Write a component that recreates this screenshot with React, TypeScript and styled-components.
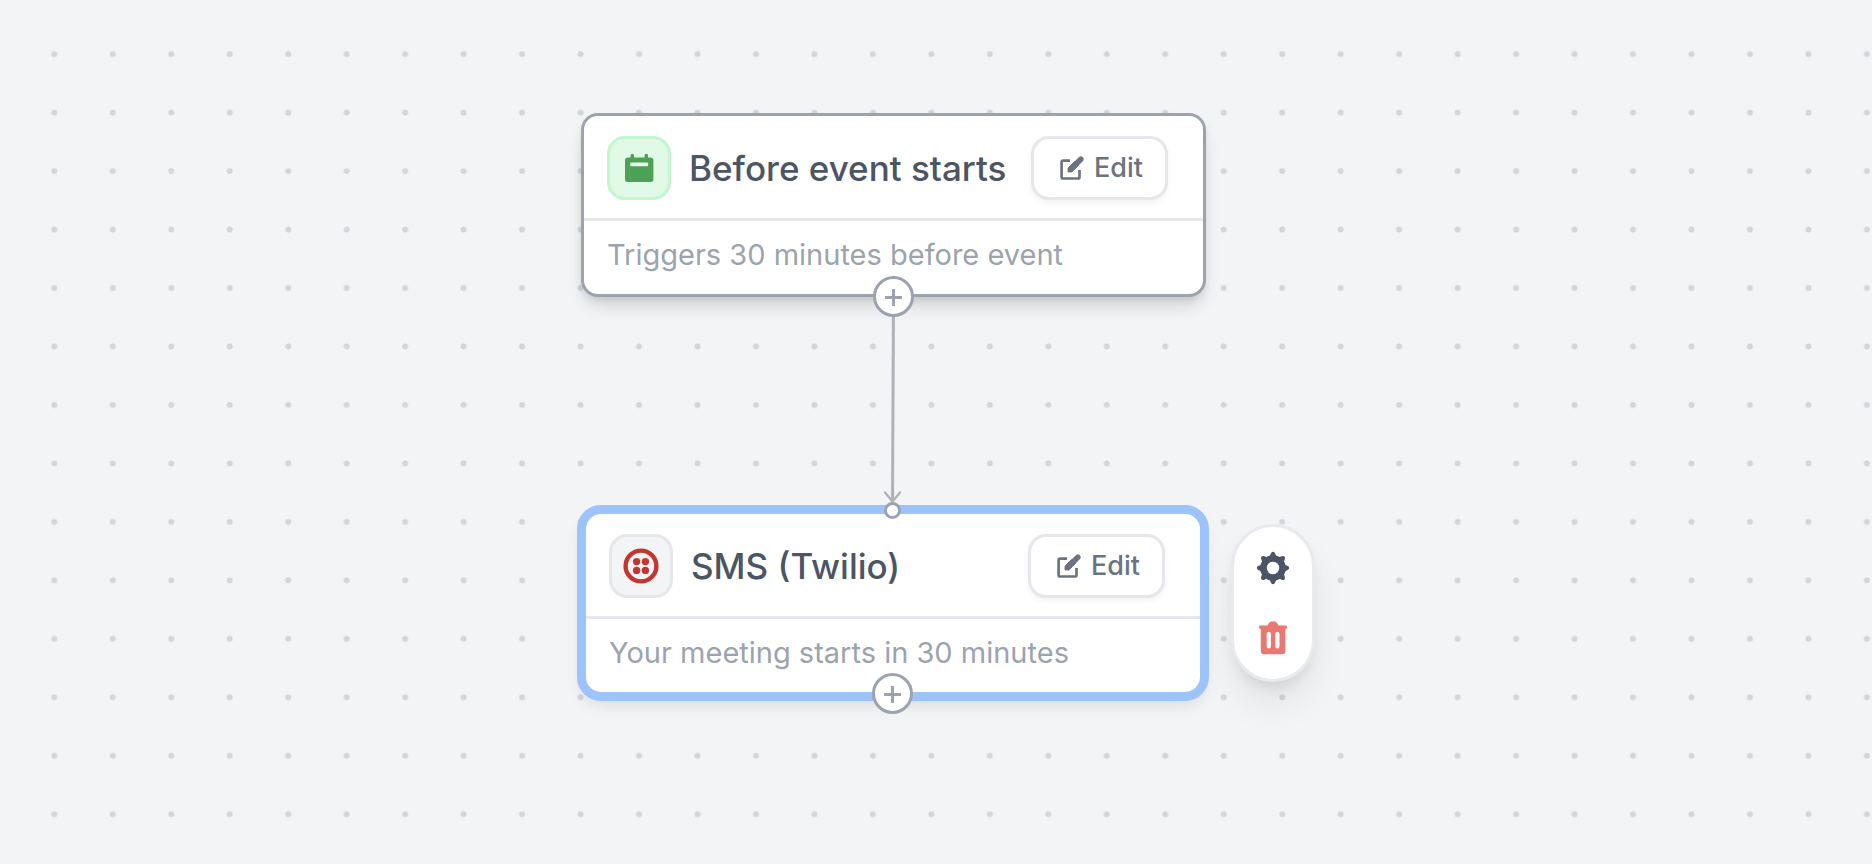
import React from "react";
import styled, { createGlobalStyle } from "styled-components";

const GlobalStyle = createGlobalStyle`
  *, *::before, *::after { box-sizing: border-box; }
  body {
    margin: 0;
    background: #f2f4f6;
    font-family: Inter, "Liberation Sans", sans-serif;
  }
`;

const Canvas = styled.main`
  position: relative;
  width: 100%;
  min-height: 100vh;
  overflow: hidden;
  background: #f2f4f6;
`;

const Backdrop = styled.svg`
  position: absolute;
  inset: 0;
  width: 100%;
  height: 100%;
`;

const NodeShell = styled.article<{ $x: number; $y: number; $width: number; $selected?: boolean }>`
  position: absolute;
  left: ${(p) => p.$x}px;
  top: ${(p) => p.$y}px;
  width: ${(p) => p.$width}px;
  background: #fff;
  border: ${(p) => (p.$selected ? "9px solid #9cc4fa" : "3px solid #9ca3af")};
  border-radius: ${(p) => (p.$selected ? 24 : 17)}px;
  box-shadow: ${(p) =>
    p.$selected
      ? "0 8px 16px -4px rgba(0, 0, 0, 0.1)"
      : "0 12px 18px -4px rgba(0, 0, 0, 0.14), 0 4px 8px -2px rgba(0, 0, 0, 0.1)"};
`;

const NodeHeader = styled.header`
  display: flex;
  align-items: center;
  padding: 20px 35px 18px 23px;
  border-bottom: 3px solid #e5e7eb;
`;

const IconTile = styled.span<{ $tone: "green" | "gray" }>`
  display: flex;
  flex: none;
  width: 64px;
  height: 64px;
  border: 3px solid ${(p) => (p.$tone === "green" ? "#c3f5d1" : "#e5e7eb")};
  border-radius: 18px;
  background: ${(p) => (p.$tone === "green" ? "#e1fae7" : "#f3f4f6")};

  svg { margin: -3px; flex: none; }
`;

const Title = styled.h2`
  flex: 1;
  margin: 0 0 0 18px;
  font-size: 35px;
  line-height: 44px;
  font-weight: 500;
  color: #4b5563;
  white-space: nowrap;
`;

const EditButton = styled.button`
  display: flex;
  flex: none;
  align-items: center;
  gap: 10px;
  height: 64px;
  padding: 0 22px 0 26px;
  border: 3px solid #e5e7eb;
  border-radius: 18px;
  background: #fff;
  box-shadow: 0 3px 6px rgba(0, 0, 0, 0.05);
  font: 500 27px/36px Inter, "Liberation Sans", sans-serif;
  color: #6b7280;
  cursor: pointer;
`;

const Description = styled.p`
  margin: 0;
  padding: 16px 23px 21px;
  font-size: 29px;
  line-height: 36px;
  color: #9ca3af;
  white-space: nowrap;
`;

const AddButton = styled.button<{ $drop: number }>`
  position: absolute;
  left: 50%;
  bottom: -${(p) => p.$drop}px;
  display: flex;
  align-items: center;
  justify-content: center;
  width: 41px;
  height: 41px;
  margin-left: -21px;
  padding: 2px 0 0;
  border: 3px solid #9ca3af;
  border-radius: 50%;
  background: #fff;
  color: #9ca3af;
  cursor: pointer;
`;

const InputHandle = styled.span`
  position: absolute;
  left: 50%;
  top: -12px;
  width: 17px;
  height: 17px;
  margin-left: -9px;
  border: 3px solid #9ca3af;
  border-radius: 50%;
  background: #fff;
`;

const Toolbar = styled.div<{ $x: number; $y: number }>`
  position: absolute;
  left: ${(p) => p.$x}px;
  top: ${(p) => p.$y}px;
  display: flex;
  flex-direction: column;
  align-items: center;
  gap: 34px;
  padding: 23px 21px;
  border: 3px solid #e8eaee;
  border-radius: 42px;
  background: #fff;
  box-shadow: 0 24px 40px -6px rgba(0, 0, 0, 0.09), 0 9px 16px -6px rgba(0, 0, 0, 0.1);
`;

const ToolButton = styled.button<{ $danger?: boolean }>`
  display: flex;
  padding: 0;
  border: 0;
  background: none;
  color: ${(p) => (p.$danger ? "#e87872" : "#4b5563")};
  cursor: pointer;
`;

const CalendarIcon = () => (
  <svg width="64" height="64" viewBox="0 0 64 64" aria-hidden="true">
    <path d="M25.3 19.5v4M39.3 19.5v4" stroke="#4ca154" strokeWidth="3.4" strokeLinecap="round" />
    <rect x="18" y="21.5" width="28.4" height="24.6" rx="3.2" fill="#4ca154" />
    <rect x="23.2" y="26.6" width="18" height="3.6" rx="1.2" fill="#e9fbee" />
  </svg>
);

const TwilioIcon = () => (
  <svg width="64" height="64" viewBox="0 0 64 64" aria-hidden="true" fill="#c23733">
    <circle cx="32" cy="32" r="15.4" fill="none" stroke="#c23733" strokeWidth="4.4" />
    <circle cx="27.6" cy="27.6" r="3.7" />
    <circle cx="36.4" cy="27.6" r="3.7" />
    <circle cx="27.6" cy="36.4" r="3.7" />
    <circle cx="36.4" cy="36.4" r="3.7" />
  </svg>
);

const PencilIcon = () => (
  <svg width="24" height="24" viewBox="0 0 24 24" aria-hidden="true" fill="none" stroke="currentColor">
    <path d="M10 4.6H3.2Q1.6 4.6 1.6 6.2V20.9Q1.6 22.5 3.2 22.5H17.9Q19.5 22.5 19.5 20.9V14" strokeWidth="2.7" />
    <path d="M20.8 3.2 12 12" strokeWidth="5.6" strokeLinecap="round" />
    <path d="M14.5 5.5 8 12V16H12L18.5 9.5Z" fill="currentColor" strokeWidth="0.8" strokeLinejoin="round" />
  </svg>
);

const PlusIcon = () => (
  <svg width="19" height="19" viewBox="0 0 19 19" aria-hidden="true">
    <path d="M9.5 1v17M1 9.5h17" stroke="currentColor" strokeWidth="3" />
  </svg>
);

const GEAR_TEETH = [0, 45, 90, 135, 180, 225, 270, 315];

const GearIcon = () => (
  <svg width="36" height="36" viewBox="0 0 36 36" aria-hidden="true">
    <circle cx="18" cy="18" r="12.8" fill="currentColor" />
    {GEAR_TEETH.map((angle) => (
      <path
        key={angle}
        d="M12.6 7Q15.2 6.6 15.8 3.7Q16.4 1.8 18 1.8T20.2 3.7Q20.8 6.6 23.4 7Z"
        fill="currentColor"
        transform={`rotate(${angle} 18 18)`}
      />
    ))}
    <circle cx="18" cy="18" r="6.2" fill="#fff" />
  </svg>
);

const TrashIcon = () => (
  <svg width="36" height="36" viewBox="0 0 36 36" aria-hidden="true">
    <path
      d="M5.2 5.6H12.4L14.4 2.6Q15.2 1.4 16.4 1.4H19.6Q20.8 1.4 21.6 2.6L23.6 5.6H30.8Q32.2 5.6 32.2 7.2T30.8 8.8H30.4V31Q30.4 34.2 27.2 34.2H8.8Q5.8 34.2 5.8 31V8.8H5.2Q3.8 8.8 3.8 7.2T5.2 5.6Z"
      fill="currentColor"
    />
    <path d="M13.8 13.8V26.4M22.4 13.8V26.4" stroke="#fff" strokeWidth="4.2" strokeLinecap="round" />
  </svg>
);

type FlowNodeProps = {
  x: number;
  y: number;
  width: number;
  title: string;
  description: string;
  tone: "green" | "gray";
  icon: React.ReactNode;
  selected?: boolean;
};

const FlowNode = ({ x, y, width, title, description, tone, icon, selected }: FlowNodeProps) => (
  <NodeShell $x={x} $y={y} $width={width} $selected={selected}>
    <NodeHeader>
      <IconTile $tone={tone}>{icon}</IconTile>
      <Title>{title}</Title>
      <EditButton type="button">
        <PencilIcon />
        Edit
      </EditButton>
    </NodeHeader>
    <Description>{description}</Description>
    {selected && <InputHandle />}
    <AddButton type="button" aria-label="Add step" $drop={selected ? 22 : 23}>
      <PlusIcon />
    </AddButton>
  </NodeShell>
);

export default function App() {
  return (
    <>
      <GlobalStyle />
      <Canvas>
        <Backdrop aria-hidden="true">
          <defs>
            <pattern id="dots" x="25.1" y="24.9" width="58.47" height="58.47" patternUnits="userSpaceOnUse">
              <circle cx="29.23" cy="29.23" r="3" fill="#d3d5db" />
            </pattern>
          </defs>
          <rect width="100%" height="100%" fill="url(#dots)" />
          <path d="M893.5 300 892.5 502" stroke="#b1b1b7" strokeWidth="3" />
          <path d="M885 492.5 892.5 501.5 900 492.5" fill="none" stroke="#b1b1b7" strokeWidth="2.4" strokeLinecap="round" />
        </Backdrop>
        <FlowNode
          x={581}
          y={113}
          width={625}
          title="Before event starts"
          description="Triggers 30 minutes before event"
          tone="green"
          icon={<CalendarIcon />}
        />
        <FlowNode
          x={577}
          y={505}
          width={632}
          title="SMS (Twilio)"
          description="Your meeting starts in 30 minutes"
          tone="gray"
          icon={<TwilioIcon />}
          selected
        />
        <Toolbar $x={1231} $y={524} role="toolbar" aria-label="Step actions">
          <ToolButton type="button" aria-label="Settings">
            <GearIcon />
          </ToolButton>
          <ToolButton type="button" aria-label="Delete" $danger>
            <TrashIcon />
          </ToolButton>
        </Toolbar>
      </Canvas>
    </>
  );
}
